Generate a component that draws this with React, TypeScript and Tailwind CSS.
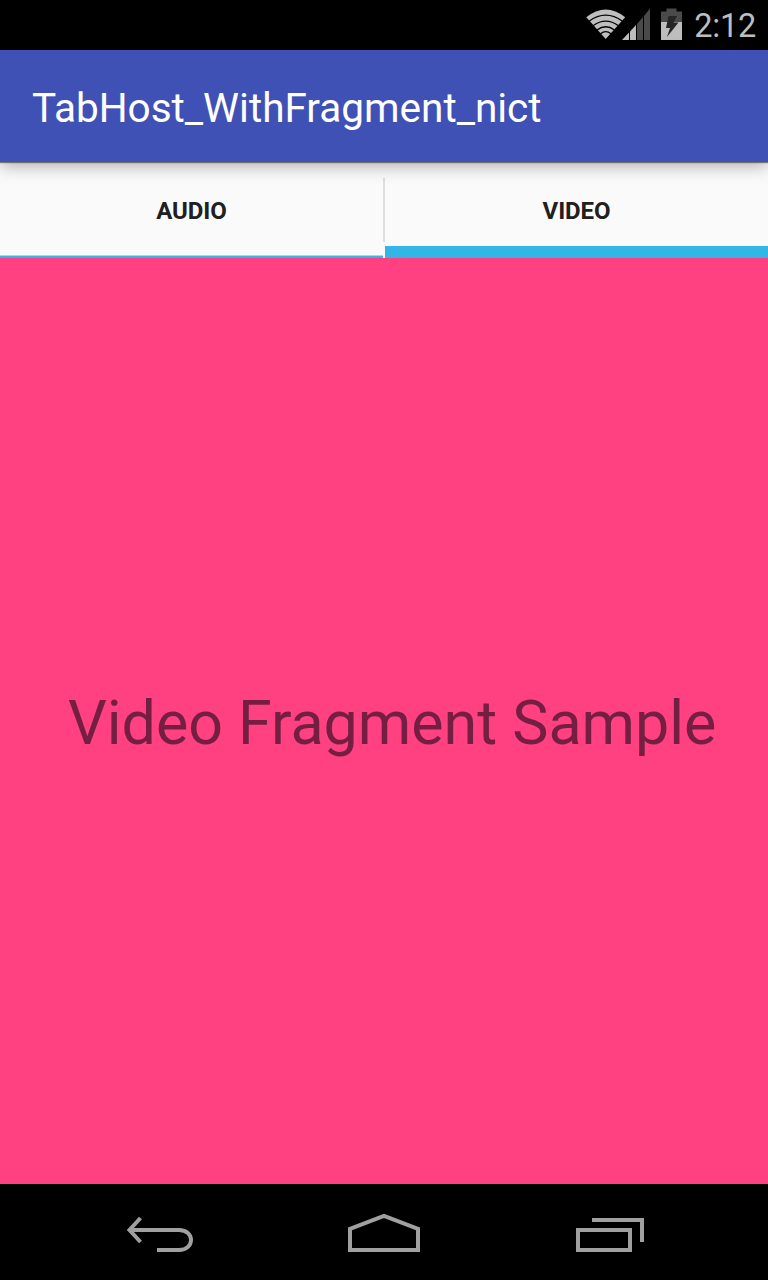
export default function App() {
  return (
    <div className="flex h-[1280px] w-[768px] flex-col overflow-hidden bg-black font-['Roboto',sans-serif]">
      <header className="flex h-[50px] items-center justify-between bg-black pr-3 pl-[583px] text-[32.5px] text-[#bebebe]">
        <svg className="h-[50px] w-[104px] shrink-0" viewBox="583 0 104 50" fill="none">
          <path d="M586.3 17.2Q605.700 1.800 625.200 17.200L605.700 39Z" fill="#bebebe" />
          <path d="M589 21.200Q605.700 9 622.500 21.200M593 25.700Q605.700 16.500 618.500 25.700M597 30Q605.700 23.500 614.500 30M600.500 33.800Q605.700 29.500 611 33.800" stroke="#000" strokeWidth="1.400" />
          <path d="M622 40L629 32.500V40Z" fill="#bebebe" />
          <path d="M630 31.500L636 25V40H630Z" fill="#bebebe" />
          <path d="M637 24L643 17V40H637ZM644 16L650 8.500V40H644Z" fill="#4a4a4a" />
          <path d="M661 11.500h5.500V8.500h10v3h5.500V22h-21Z" fill="#4a4a4a" />
          <path d="M661 22h21v18h-21Z" fill="#bebebe" />
          <path d="M668.500 16H677L673.500 22.500H678.500L667 37L670 28H666Z" fill="#262626" />
        </svg>
        <span className="pt-0.5 leading-[50px] tracking-[-0.25px]">2:12</span>
      </header>
      <div className="relative z-10 flex h-28 items-center bg-[#3f51b5] pl-8 pt-1 text-[40.5px] text-white shadow-[0_1px_1px_rgba(0,0,0,0.45),0_4px_16px_rgba(0,0,0,0.3)]">
        <h1>TabHost_WithFragment_nict</h1>
      </div>
      <nav className="flex h-24 bg-[#fafafa] text-[24px] font-bold tracking-[-0.1px] text-[#202020]">
        <button className="flex h-24 w-[383px] flex-col items-center">
          <span className="flex h-[93px] items-center pt-1">AUDIO</span>
          <span className="h-[3px] w-full border-t border-[#9fdaf1] bg-[#33b5e5]" />
        </button>
        <div className="mt-4 h-16 w-0.5 bg-[#dedede]" />
        <button className="flex h-24 w-[383px] flex-col items-center">
          <span className="flex h-[84px] items-center pt-[13px]">VIDEO</span>
          <span className="h-3 w-full bg-[#33b5e5]" />
        </button>
      </nav>
      <main className="flex h-[926px] items-center bg-[#ff4081] pl-[68px] pt-[5px] text-[61px] tracking-[-0.04px] text-[#741f42]">
        <p>Video Fragment Sample</p>
      </main>
      <footer className="flex h-24 justify-center bg-black">
        <svg className="h-24 w-[768px]" viewBox="0 0 768 96" fill="none" stroke="#a0a0a0" strokeWidth="4">
          <path d="M129 46H179C195 46 195 66 179 66H157M140.500 34L129.500 46L140.500 58" />
          <path d="M350 66V45L384 32L418 45V66Z" />
          <path d="M578 46H630V66H578ZM592 36H642V58" />
        </svg>
      </footer>
    </div>
  );
}
